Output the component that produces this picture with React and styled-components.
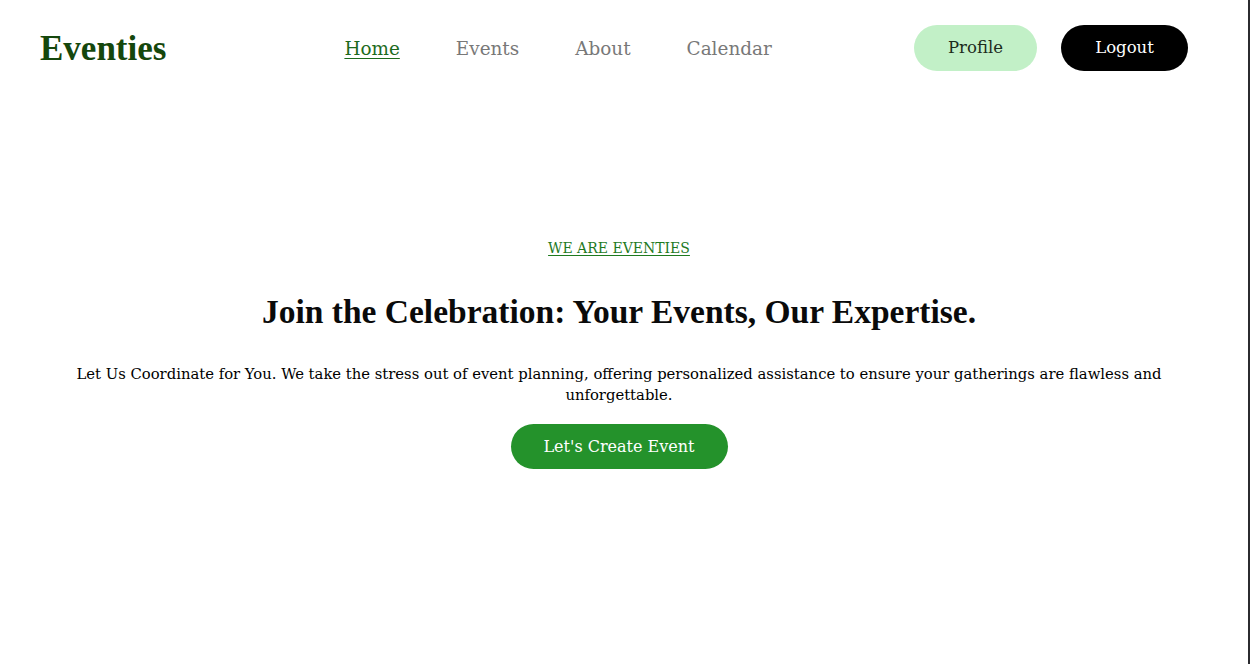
import React from 'react';
import styled, { createGlobalStyle } from 'styled-components';

const GlobalStyle = createGlobalStyle`
  html, body {
    margin: 0;
    padding: 0;
    background: #ffffff;
  }
  body {
    font-family: "DejaVu Serif", "Liberation Serif", serif;
    color: #000;
  }
`;

const Page = styled.div`
  min-height: 100vh;
  box-sizing: border-box;
  border-right: 2px solid #2b2b2f;
`;

const Header = styled.header`
  display: flex;
  align-items: center;
  height: 95px;
  padding: 0 60px 0 40px;
  box-sizing: border-box;
`;

const Logo = styled.div`
  font-family: "Liberation Serif", serif;
  font-weight: 700;
  font-size: 35px;
  color: #15470c;
  padding-top: 2px;
`;

const Nav = styled.nav`
  display: flex;
  gap: 56px;
  margin-left: 178px;
  padding-top: 2px;
`;

const NavLink = styled.a`
  font-size: 18.4px;
  color: ${(p) => (p.$active ? '#1d6a1d' : '#787878')};
  text-decoration: ${(p) => (p.$active ? 'underline' : 'none')};
  text-underline-offset: 3px;
  cursor: pointer;
`;

const Actions = styled.div`
  display: flex;
  gap: 24px;
  margin-left: auto;
`;

const PillButton = styled.button`
  height: 46px;
  width: ${(p) => p.$width}px;
  border: none;
  border-radius: 23px;
  font-family: "DejaVu Serif", serif;
  font-size: 16.5px;
  cursor: pointer;
  background: ${(p) => (p.$dark ? '#000' : '#c2f0c7')};
  color: ${(p) => (p.$dark ? '#fff' : '#1c2b1c')};
`;

const Hero = styled.section`
  display: flex;
  flex-direction: column;
  align-items: center;
  text-align: center;
  padding: 145px 70px 0 60px;
`;

const Eyebrow = styled.a`
  font-size: 14px;
  color: #1e7a1e;
  text-decoration: underline;
  text-underline-offset: 2px;
`;

const Title = styled.h1`
  font-family: "Liberation Serif", serif;
  font-weight: 700;
  font-size: 33.5px;
  margin: 37px 0 0;
  color: #0a0a0a;
`;

const Lead = styled.p`
  font-size: 14.8px;
  line-height: 21px;
  margin: 32px 0 0;
`;

const CtaButton = styled.button`
  margin-top: 19px;
  width: 217px;
  height: 45px;
  border: none;
  border-radius: 23px;
  background: #24922b;
  color: #fff;
  font-family: "DejaVu Serif", serif;
  font-size: 16px;
  cursor: pointer;
`;

export default function App() {
  return (
    <Page>
      <GlobalStyle />
      <Header>
        <Logo>Eventies</Logo>
        <Nav>
          <NavLink $active>Home</NavLink>
          <NavLink>Events</NavLink>
          <NavLink>About</NavLink>
          <NavLink>Calendar</NavLink>
        </Nav>
        <Actions>
          <PillButton $width={123}>Profile</PillButton>
          <PillButton $width={127} $dark>Logout</PillButton>
        </Actions>
      </Header>
      <Hero>
        <Eyebrow>WE ARE EVENTIES</Eyebrow>
        <Title>Join the Celebration: Your Events, Our Expertise.</Title>
        <Lead>
          Let Us Coordinate for You. We take the stress out of event planning, offering personalized
          assistance to ensure your gatherings are flawless and unforgettable.
        </Lead>
        <CtaButton>Let's Create Event</CtaButton>
      </Hero>
    </Page>
  );
}
